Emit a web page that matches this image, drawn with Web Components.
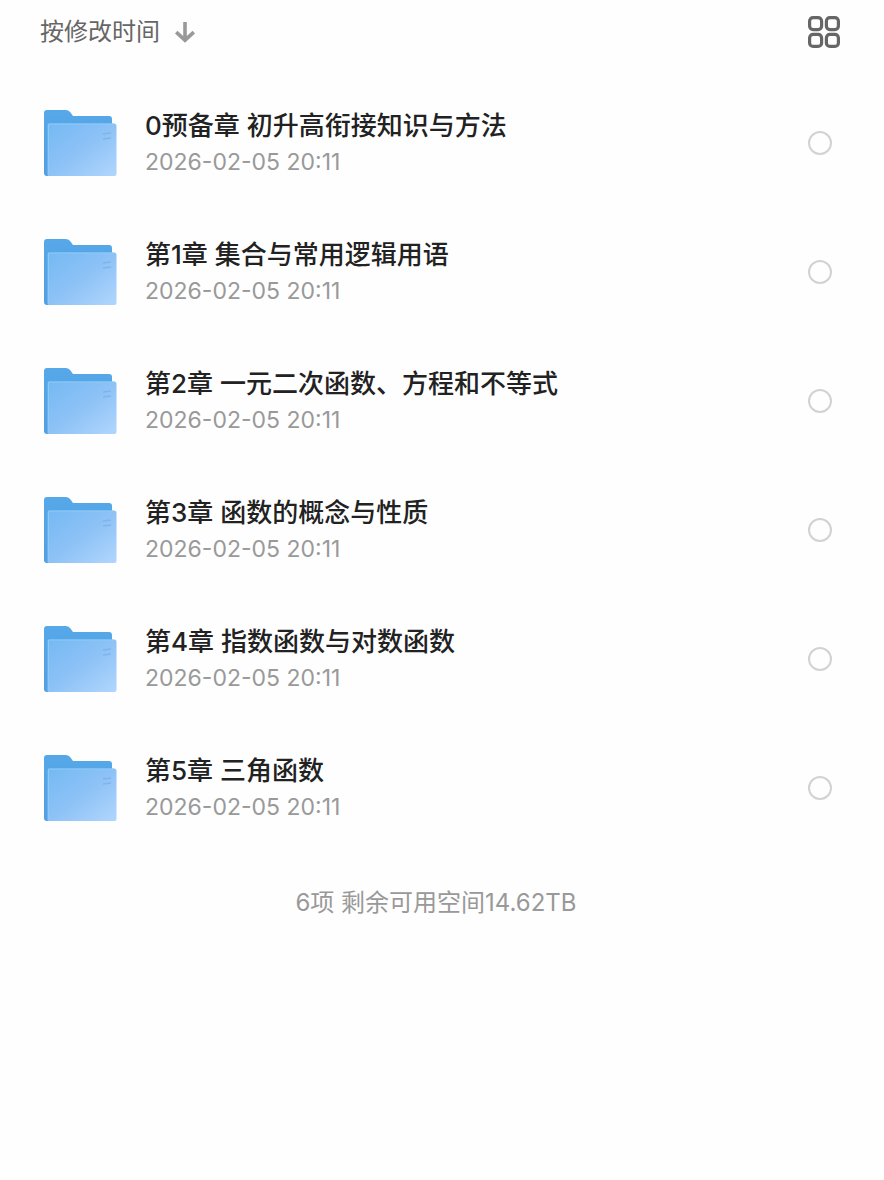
<!DOCTYPE html>
<html lang="zh-CN">
<head>
<meta charset="utf-8">
<meta name="viewport" content="width=device-width, initial-scale=1">
<title>文件</title>
<style>
html { background: #fefefe; }
body { margin: 0; font-family: Inter, "Noto Sans CJK SC", sans-serif; }
</style>
</head>
<body>
<file-browser></file-browser>

<template id="browser-template">
  <style>
    :host { display: block; min-height: 100vh; background: #fefefe; }
    footer { display: block; padding: 32px 12px 32px 0; text-align: center; font-size: 24px; line-height: 38px; color: #999; }
    ul { display: block; margin: 0; padding: 0; list-style: none; }
  </style>
  <file-toolbar>按修改时间</file-toolbar>
  <main>
    <ul></ul>
  </main>
  <footer>6项 剩余可用空间14.62TB</footer>
</template>

<template id="toolbar-template">
  <style>
    :host { display: flex; align-items: center; justify-content: space-between; height: 64px; padding: 0 44px 14px 40px; }
    button { display: flex; align-items: center; gap: 14px; margin: 0; padding: 0; border: 0; background: none; font: inherit; font-size: 24px; line-height: 36px; color: #666; cursor: pointer; }
    svg { display: block; }
  </style>
  <button type="button">
    <slot></slot>
    <svg width="22" height="24" viewBox="0 0 22 24" fill="none" stroke="#999" stroke-width="3.600" aria-hidden="true"><path d="M11 2v18M2.200 12.200l8.800 8 8.800-8"/></svg>
  </button>
  <button type="button" aria-label="网格视图">
    <svg width="32" height="32" viewBox="0 0 32 32" fill="none" stroke="#666" stroke-width="3.200"><rect x="1.600" y="1.600" width="12" height="12" rx="3.500"/><rect x="18.400" y="1.600" width="12" height="12" rx="3.500"/><rect x="1.600" y="18.400" width="12" height="12" rx="3.500"/><rect x="18.400" y="18.400" width="12" height="12" rx="3.500"/></svg>
  </button>
</template>

<template id="folder-template">
  <style>
    :host { display: block; width: 74px; height: 68px; }
    svg { display: block; }
  </style>
  <svg width="74" height="68" viewBox="0 0 74 68" aria-hidden="true">
    <defs>
      <linearGradient id="back" x1="0" y1="0" x2="0" y2="1"><stop offset="0" stop-color="#56a8e8"/><stop offset="1" stop-color="#529fe2"/></linearGradient>
      <linearGradient id="front" x1="0" y1="0" x2="1" y2="1"><stop offset="0" stop-color="#74b9f3"/><stop offset=".5" stop-color="#8dc2f6"/><stop offset="1" stop-color="#b1d6fd"/></linearGradient>
    </defs>
    <path d="M1 4q0-3 3-3h19q3 0 4.500 2.500L30 7h36q3 0 3 3v57H4q-3 0-3-3z" fill="url(#back)"/>
    <path d="M6 14.500h65q2.500 0 2.500 2.500v48q0 2-2 2H6q-1.500 0-1.500-1.500V16q0-1.500 1.500-1.500z" fill="url(#front)"/>
    <path d="M5.500 66V15H71" fill="none" stroke="#8dcaf8" stroke-width="1"/>
    <path d="M60 25l8-1M60 30l8-1" stroke="#7fb5ec" stroke-width="1.500"/>
  </svg>
</template>

<template id="row-template">
  <style>
    :host { display: block; }
    label { display: flex; align-items: center; height: 129px; padding: 0 52px 0 43px; cursor: pointer; }
    .text { flex: 1; min-width: 0; margin-left: 28px; }
    .name { display: block; font-size: 26px; line-height: 38px; font-weight: 500; color: #222; }
    .date { display: block; font-size: 23px; line-height: 34px; color: #999; }
    input { appearance: none; flex: none; box-sizing: border-box; width: 24px; height: 24px; margin: 0; border: 2px solid #d2d2d2; border-radius: 50%; }
    input:checked { border-color: #529fe2; background: #529fe2; }
  </style>
  <label>
    <folder-icon></folder-icon>
    <span class="text">
      <span class="name"><slot></slot></span>
      <span class="date"><slot name="date"></slot></span>
    </span>
    <input type="checkbox">
  </label>
</template>

<script>
class TemplateElement extends HTMLElement {
  constructor() {
    super();
    const template = document.getElementById(this.constructor.template);
    this.attachShadow({ mode: 'open' }).append(template.content.cloneNode(true));
  }
}
class FolderIcon extends TemplateElement { static template = 'folder-template'; }
class FileToolbar extends TemplateElement { static template = 'toolbar-template'; }
class FileRow extends TemplateElement { static template = 'row-template'; }
class FileBrowser extends TemplateElement {
  static template = 'browser-template';
  connectedCallback() {
    const list = this.shadowRoot.querySelector('ul');
    const names = [
      '0预备章 初升高衔接知识与方法',
      '第1章 集合与常用逻辑用语',
      '第2章 一元二次函数、方程和不等式',
      '第3章 函数的概念与性质',
      '第4章 指数函数与对数函数',
      '第5章 三角函数'
    ];
    list.replaceChildren(...names.map(name => {
      const item = document.createElement('li');
      const row = document.createElement('file-row');
      const date = document.createElement('time');
      date.slot = 'date';
      date.dateTime = '2026-02-05T20:11';
      date.textContent = '2026-02-05 20:11';
      row.append(name, date);
      item.append(row);
      return item;
    }));
  }
}
customElements.define('folder-icon', FolderIcon);
customElements.define('file-toolbar', FileToolbar);
customElements.define('file-row', FileRow);
customElements.define('file-browser', FileBrowser);
</script>
</body>
</html>
